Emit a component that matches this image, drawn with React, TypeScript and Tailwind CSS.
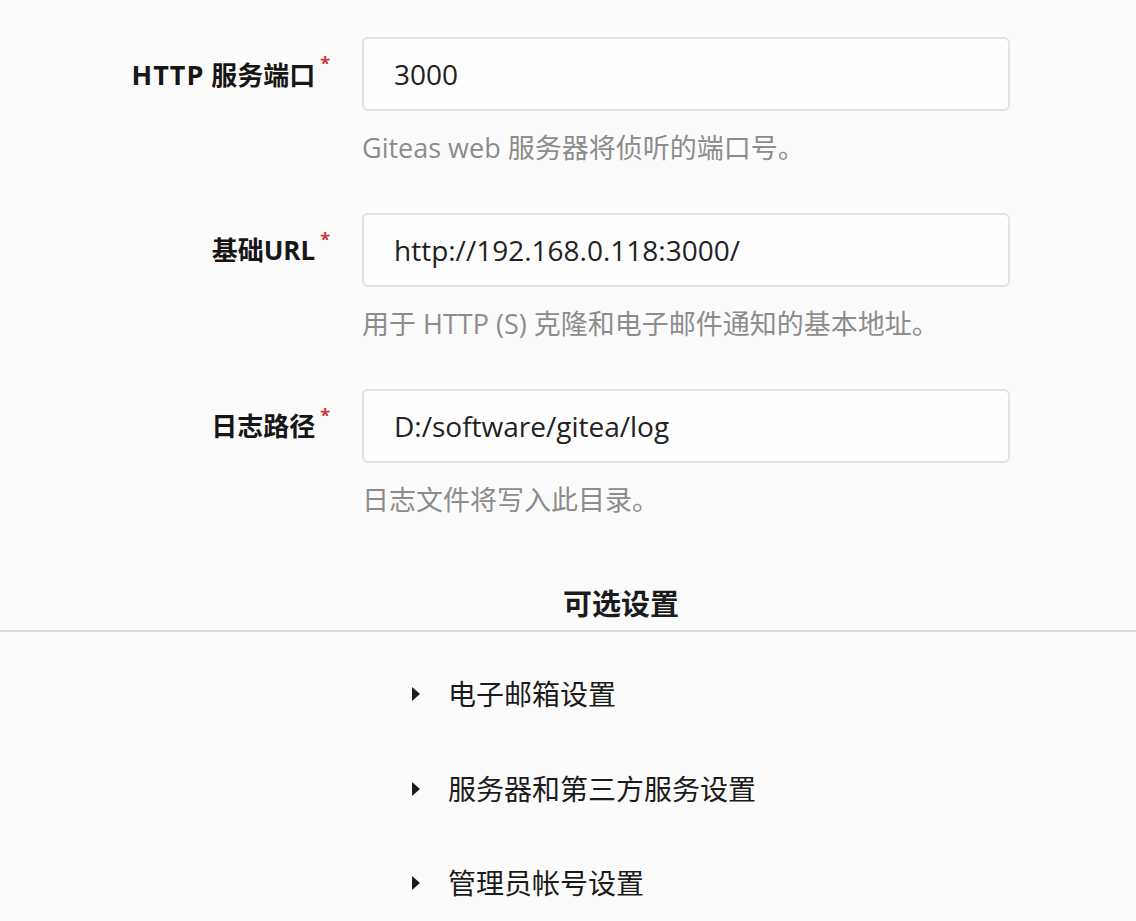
import React from "react";

const font = { fontFamily: '"Open Sans", "Noto Sans CJK SC", sans-serif' };

function Field({ label, value, help }: { label: React.ReactNode; value: string; help: string }) {
  return (
    <div className="flex">
      <div className="w-[330px] shrink-0 h-[74px] flex items-center justify-end">
        <span className="text-[26px] font-bold text-[#161616] leading-none">{label}</span>
        <span className="text-[#c93a3a] text-[18px] font-bold self-start mt-[17px] ml-[5px] leading-none">*</span>
      </div>
      <div className="ml-[32px] w-[648px]">
        <div className="h-[74px] rounded-[6px] border-2 border-[#e2e1e3] bg-[#fefefe] flex items-center px-[30px] text-[28px] text-[#222]">
          {value}
        </div>
        <div className="h-[40px] mt-[17px] flex items-center text-[27px] text-[#8c8c8c] whitespace-nowrap">
          {help}
        </div>
      </div>
    </div>
  );
}

function Item({ text }: { text: string }) {
  return (
    <div className="h-[94.5px] flex items-center pl-[411px]">
      <svg width="10" height="16" viewBox="0 0 10 16" className="shrink-0">
        <path d="M1 1 L9 8 L1 15 Z" fill="#1b1b1b" />
      </svg>
      <span className="ml-[27px] text-[28px] text-[#1b1b1b]">{text}</span>
    </div>
  );
}

export default function App() {
  return (
    <div className="w-[1136px] h-[921px] bg-[#fcfbfc] overflow-hidden" style={font}>
      <div className="pt-[37px] flex flex-col gap-[45px]">
        <Field
          label={
            <>
              <span className="text-[27px] tracking-[1px]">HTTP</span> 服务端口
            </>
          }
          value="3000"
          help="Giteas web 服务器将侦听的端口号。"
        />
        <Field label="基础URL" value="http://192.168.0.118:3000/" help="用于 HTTP (S) 克隆和电子邮件通知的基本地址。" />
        <Field label="日志路径" value="D:/software/gitea/log" help="日志文件将写入此目录。" />
      </div>
      <div className="mt-[59px] h-[50px] flex items-center justify-center pl-[106px] text-[29px] font-bold text-[#1b1b1b]">
        可选设置
      </div>
      <div className="mt-[1px] border-t-2 border-[#dcdbdc]" />
      <div className="pt-[15px]">
        <Item text="电子邮箱设置" />
        <Item text="服务器和第三方服务设置" />
        <Item text="管理员帐号设置" />
      </div>
    </div>
  );
}
